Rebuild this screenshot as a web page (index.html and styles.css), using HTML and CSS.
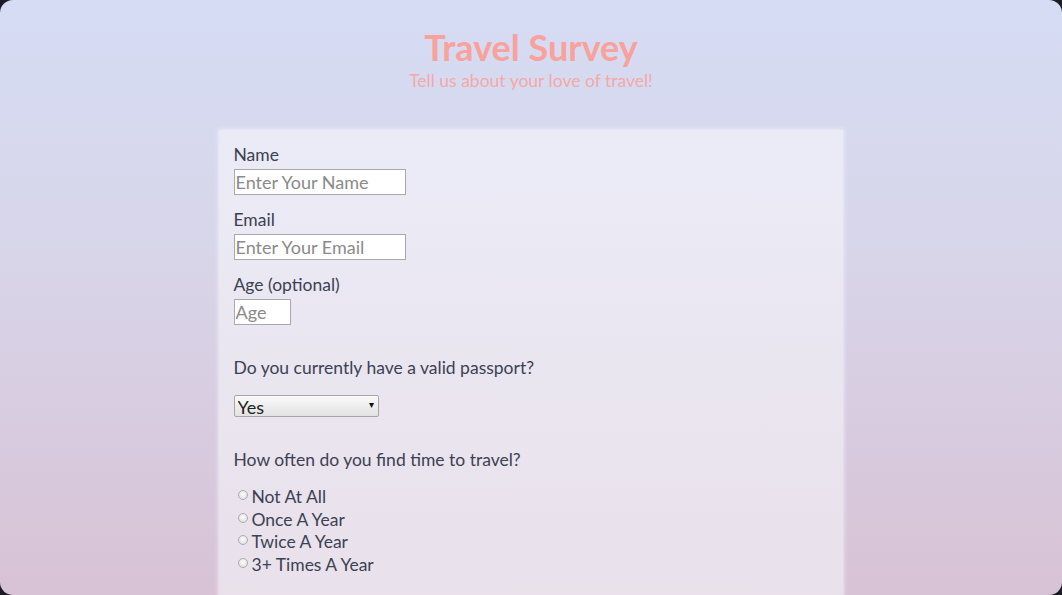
FILE: index.html
```html
<!DOCTYPE html>
<html lang="en">
<head>
<meta charset="utf-8">
<title>Travel Survey</title>
<link rel="stylesheet" href="styles.css">
</head>
<body>
<div class="page">
  <header class="header">
    <h1 class="title">Travel Survey</h1>
    <p class="subtitle">Tell us about your love of travel!</p>
  </header>
  <form class="survey">
    <div class="field">
      <label class="label" for="name">Name</label>
      <input class="text-input wide" id="name" type="text" placeholder="Enter Your Name">
    </div>
    <div class="field">
      <label class="label" for="email">Email</label>
      <input class="text-input wide" id="email" type="email" placeholder="Enter Your Email">
    </div>
    <div class="field">
      <label class="label" for="age">Age (optional)</label>
      <input class="text-input narrow" id="age" type="text" placeholder="Age">
    </div>
    <div class="question">
      <p class="q-text">Do you currently have a valid passport?</p>
      <div class="select-wrap">
        <select class="select">
          <option>Yes</option>
          <option>No</option>
        </select>
        <span class="arrow">▾</span>
      </div>
    </div>
    <div class="question">
      <p class="q-text">How often do you find time to travel?</p>
      <ul class="radios">
        <li class="radio-row"><input class="radio" type="radio" name="freq"><span>Not At All</span></li>
        <li class="radio-row"><input class="radio" type="radio" name="freq"><span>Once A Year</span></li>
        <li class="radio-row"><input class="radio" type="radio" name="freq"><span>Twice A Year</span></li>
        <li class="radio-row"><input class="radio" type="radio" name="freq"><span>3+ Times A Year</span></li>
      </ul>
    </div>
  </form>
</div>
</body>
</html>
```
FILE: styles.css
```css
* { box-sizing: border-box; }
html {
  margin: 0;
  background: #1c1c24;
  height: 100%;
}
body {
  margin: 0;
  height: 595px;
  overflow: hidden;
  border-radius: 13px;
  background: linear-gradient(to bottom, #d5dcf4 0%, #d8d6ea 40%, #d8c2d5 100%);
  font-family: Lato, "Open Sans", sans-serif;
  color: #3c4152;
}
.page {
  display: flex;
  flex-direction: column;
  align-items: center;
}
.header {
  text-align: center;
  padding-top: 26px;
}
.title {
  margin: 0;
  font-size: 36px;
  font-weight: 700;
  color: #f8a29b;
  line-height: 42px;
}
.subtitle {
  margin: 2px 0 0;
  font-size: 17.5px;
  font-weight: 400;
  color: #f5a8a6;
  line-height: 22px;
}
.survey {
  margin-top: 38px;
  margin-right: 1px;
  width: 624px;
  height: 470px;
  background: linear-gradient(to bottom, rgba(238,238,248,0.85), rgba(236,230,238,0.85));
  box-shadow: 0 0 4px 1px rgba(240,240,250,0.8);
  padding: 14px 15px 0 15px;
}
.field {
  display: flex;
  flex-direction: column;
  align-items: flex-start;
  margin-bottom: 14px;
}
.label {
  font-size: 17.5px;
  line-height: 22px;
  margin-bottom: 3px;
}
.text-input {
  height: 26px;
  border: 1px solid #a9a9a9;
  background: #fff;
  font-family: inherit;
  font-size: 18px;
  padding: 0 1px;
  color: #333;
}
.text-input::placeholder { color: #8a8a8a; }
.wide { width: 172px; }
.narrow { width: 57px; }
.question { margin-top: 32px; }
.q-text {
  margin: 0 0 16px;
  font-size: 17.5px;
  line-height: 22px;
}
.select-wrap {
  position: relative;
  width: 145px;
  height: 22px;
}
.select {
  appearance: none;
  width: 145px;
  height: 22px;
  border: 1px solid #a6a6a6;
  border-radius: 2px;
  background: linear-gradient(to bottom, #fafafa, #e2e2e2);
  font-family: inherit;
  font-size: 18px;
  color: #222;
  padding: 0 3px;
}
.arrow {
  position: absolute;
  right: 5px;
  top: 3px;
  font-size: 10px;
  color: #111;
  pointer-events: none;
}
.radios {
  list-style: none;
  margin: -1px 0 0;
  padding: 0 0 0 4px;
}
.radio-row {
  display: flex;
  align-items: flex-start;
  font-size: 17.5px;
  line-height: 22.5px;
}
.radio {
  appearance: none;
  width: 10px;
  height: 10px;
  margin: 4px 4px 0 0;
  border: 1px solid #acacac;
  border-radius: 50%;
  background: radial-gradient(circle at 50% 40%, #fdfdfd, #d8d8d8);
}
```
